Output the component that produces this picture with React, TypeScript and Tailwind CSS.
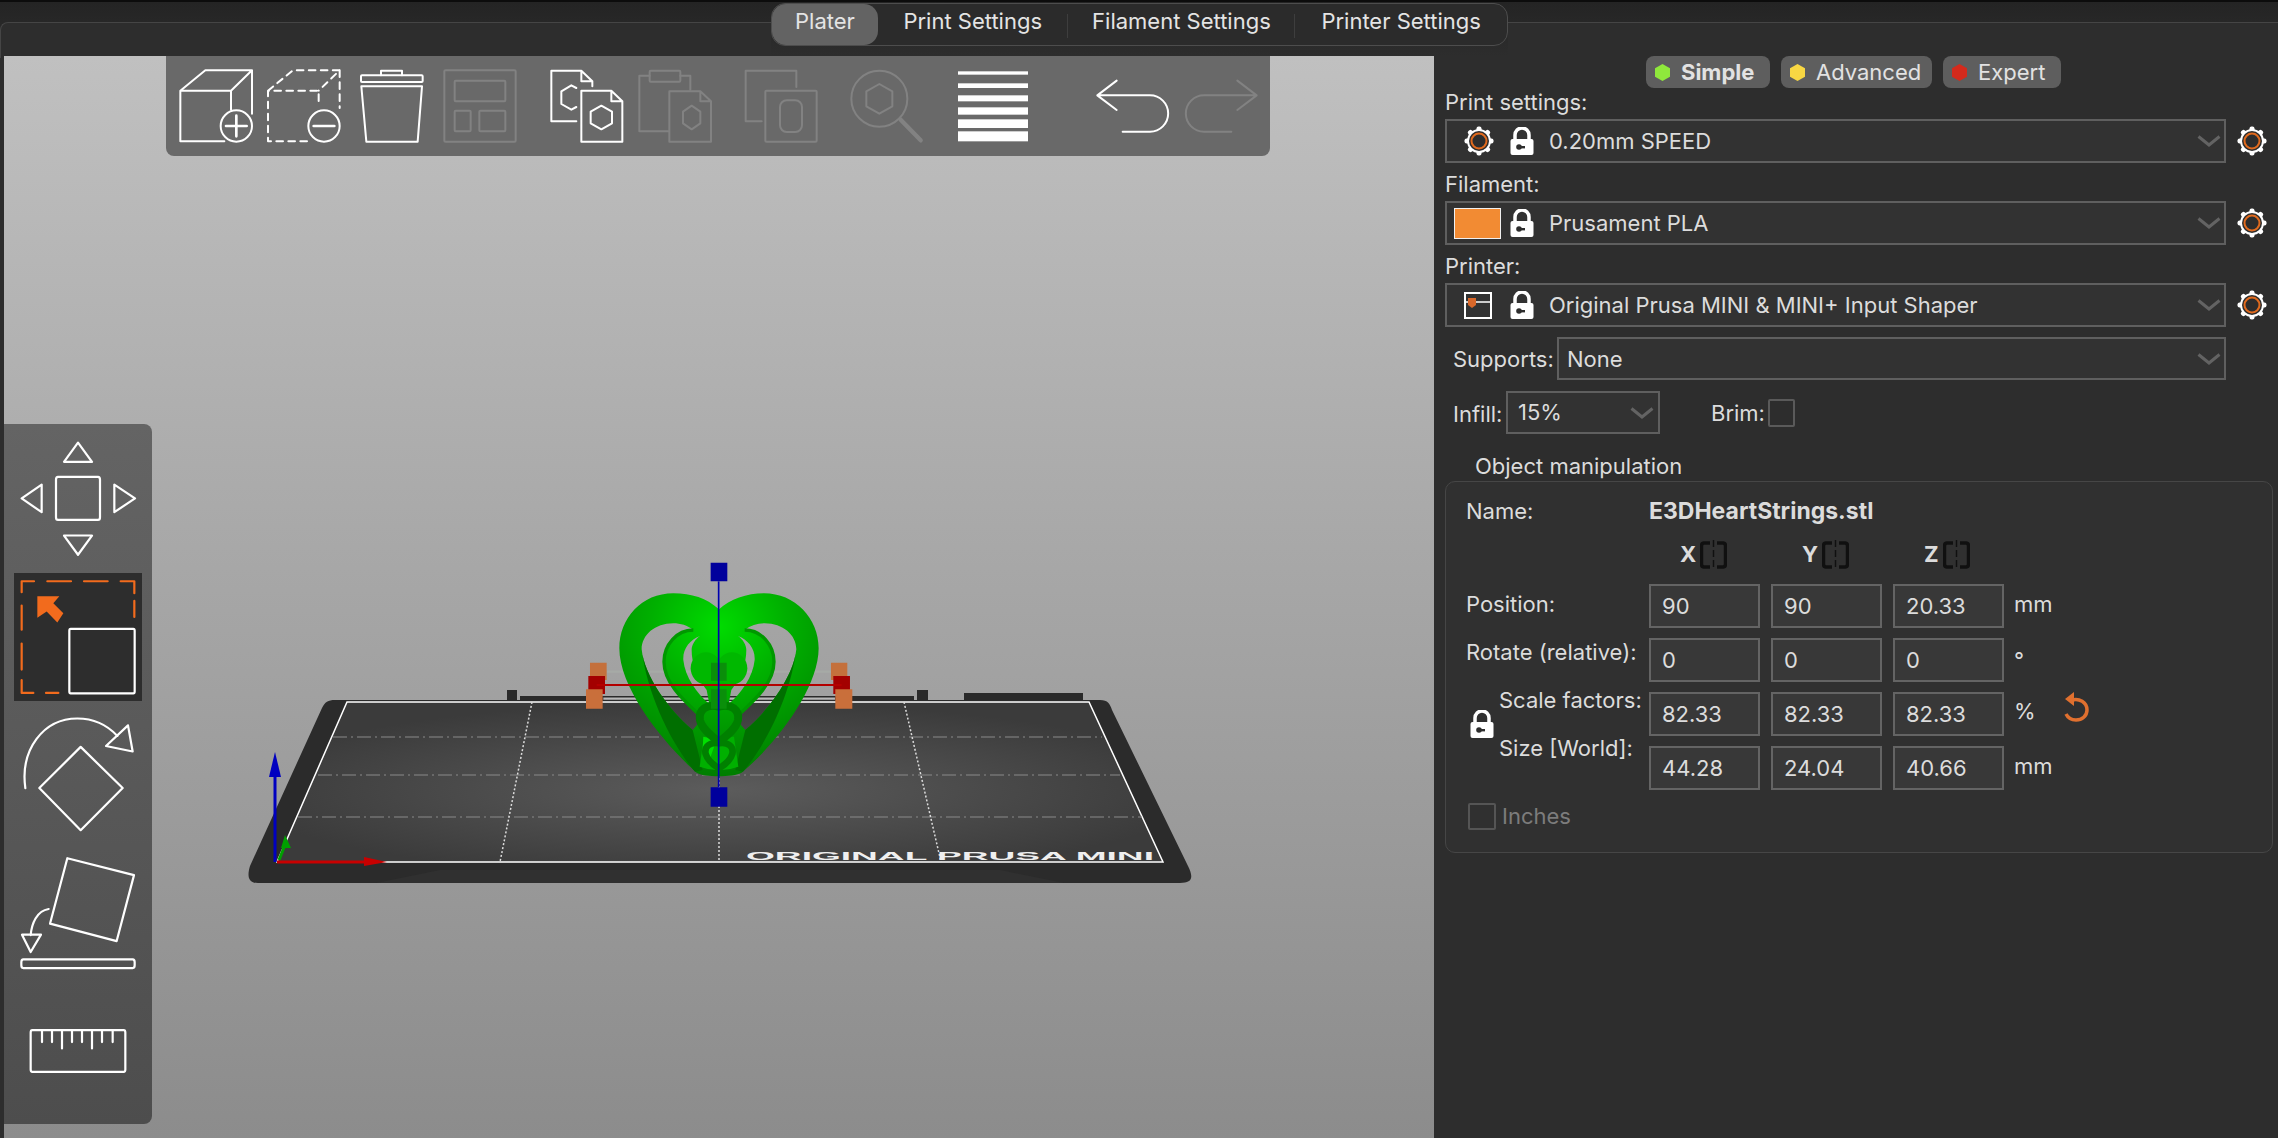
import React from 'react';

const WHITE = '#ffffff';
const DIM = '#828282';

const ToolIcon: React.FC<{ vb: number; children: React.ReactNode; color?: string; className?: string }> = ({ vb, children, color = WHITE, className = '' }) => (
  <svg
    width={76}
    height={76}
    viewBox={`${vb} 35 228 228`}
    fill="none"
    stroke={color}
    strokeWidth={6}
    strokeLinejoin="round"
    strokeLinecap="round"
    className={`shrink-0 ${className}`}
  >
    {children}
  </svg>
);

const Toolbar: React.FC = () => (
  <div className="absolute left-[162px] top-0 flex h-[100px] w-[1104px] items-center gap-3 rounded-b-lg bg-[#696969] pl-3">
    <ToolIcon vb={26}>
      <path d="M165 255H33V103H185V160M33 103L108 42H248L185 103M248 42V172" />
      <circle cx={201} cy={209} r={47} />
      <path d="M201 178V240M170 209H232" strokeWidth={8} />
    </ToolIcon>
    <ToolIcon vb={292}>
      <path d="M415 255H298V103H450V150M298 103L373 42H513L450 103M513 42V155" strokeDasharray="20 16" />
      <circle cx={466} cy={209} r={47} />
      <path d="M435 209H497" strokeWidth={8} />
    </ToolIcon>
    <ToolIcon vb={556}>
      <rect x={577} y={57} width={185} height={20} rx={3} />
      <path d="M637 57V43H700V57M578 90H760L747 256H593Z" />
    </ToolIcon>
    <ToolIcon vb={819} color={DIM}>
      <rect x={826} y={42} width={214} height={214} rx={3} />
      <rect x={857} y={73} width={152} height={62} rx={3} />
      <rect x={857} y={163} width={48} height={62} rx={3} />
      <rect x={931} y={163} width={78} height={62} rx={3} />
    </ToolIcon>
    <ToolIcon vb={1138} className="ml-[19px]">
      <path d="M1220 195H1145V43H1235L1268 75V90M1235 43V75H1268M1220 95L1205 87L1175 105V143L1205 160L1220 152" />
      <path d="M1235 103H1325L1358 135V256H1235ZM1325 103V135H1358M1295 148L1327 166V201L1295 219L1263 201V166Z" />
    </ToolIcon>
    <ToolIcon vb={1400} color={DIM}>
      <path d="M1495 225H1407V58H1438M1530 58H1560V100" />
      <rect x={1438} y={43} width={92} height={33} rx={3} />
      <path d="M1497 105H1590L1622 135V256H1497ZM1590 105V135H1622M1564 148L1590 166V201L1564 219L1538 201V166Z" />
    </ToolIcon>
    <ToolIcon vb={159} color={DIM} className="ml-[18px]">
      <path d="M215 195H167V43H319V92" />
      <rect x={226} y={103} width={154} height={153} rx={3} />
      <rect x={270} y={132} width={66} height={95} rx={20} />
    </ToolIcon>
    <ToolIcon vb={477} color={DIM} className="ml-[18px]">
      <circle cx={568} cy={127} r={84} />
      <path d="M568 83L607 105V150L568 172L529 150V105Z" />
      <path d="M632 190L692 252" strokeWidth={13} />
    </ToolIcon>
    <svg width={76} height={76} viewBox="795 35 228 228" fill={WHITE} className="ml-[18px] shrink-0">
      <rect x={804} y={45} width={210} height={10} />
      <rect x={804} y={81} width={210} height={14} />
      <rect x={804} y={117} width={210} height={18} />
      <rect x={804} y={153} width={210} height={22} />
      <rect x={804} y={189} width={210} height={26} />
      <rect x={804} y={225} width={210} height={30} />
    </svg>
    <ToolIcon vb={1215} className="ml-[52px]">
      <path d="M1280 73L1222 117L1280 161M1222 117H1380A54 54 0 0 1 1380 226H1298" />
    </ToolIcon>
    <ToolIcon vb={1215} color={DIM}>
      <g transform="translate(2658 0) scale(-1 1)">
        <path d="M1280 73L1222 117L1280 161M1222 117H1380A54 54 0 0 1 1380 226H1298" />
      </g>
    </ToolIcon>
  </div>
);

// side icons are traced on a grid that is 3x wide and 2.184x tall, hence preserveAspectRatio none
const SideIcon: React.FC<{ y: number; h: number; children: React.ReactNode; className?: string }> = ({ y, h, children, className = '' }) => (
  <svg
    width={128}
    height={h / 2.184}
    viewBox={`42 ${y} 384 ${h}`}
    preserveAspectRatio="none"
    fill="none"
    stroke={WHITE}
    strokeWidth={2.2}
    strokeLinejoin="round"
    strokeLinecap="round"
    className={`shrink-0 [&_*]:[vector-effect:non-scaling-stroke] ${className}`}
  >
    {children}
  </svg>
);

const LeftTools: React.FC = () => (
  <div className="absolute left-0 top-[368px] flex h-[700px] w-[148px] flex-col items-center rounded-r-lg bg-linear-to-b from-[#646464] to-[#4d4d4d] pt-[14px]">
    <SideIcon y={40} h={264}>
      <path d="M234 50L276 92H192ZM234 295L276 253H192ZM65 172L125 142V202ZM405 172L343 142V202Z" />
      <rect x={168} y={125} width={132} height={94} rx={6} />
    </SideIcon>
    <SideIcon y={334} h={279} className="mt-[14px] bg-[#2d2d2d]">
      <path
        d="M65 376V352H102M142 352H213M252 352H323M362 352H403V378M403 395V430M65 405V458M65 488V545M65 568V596H100M138 596H175"
        stroke="#f26b1d"
      />
      <path d="M112 385H178L160 400L190 422L172 442L140 418L112 432Z" fill="#f26b1d" stroke="none" />
      <rect x={208} y={456} width={196} height={141} rx={4} />
    </SideIcon>
    <SideIcon y={640} h={265} className="mt-[12px]">
      <path d="M76 804C60 720 130 652 232 652C280 652 320 665 352 690" />
      <path d="M384 667L398 724L318 712ZM242 714L368 804L242 896L118 804Z" />
    </SideIcon>
    <SideIcon y={950} h={255} className="mt-[21px]">
      <path d="M202 957L402 994L350 1138L150 1100Z" />
      <path d="M146 1068C110 1072 95 1100 92 1125M66 1124H123L92 1162Z" />
      <rect x={64} y={1178} width={340} height={19} rx={6} />
    </SideIcon>
    <SideIcon y={1325} h={105} className="mt-[55px]">
      <rect x={92} y={1332} width={284} height={91} rx={5} />
      <path d="M126 1332V1358M156 1332V1358M186 1332V1372M216 1332V1358M246 1332V1358M276 1332V1372M306 1332V1358M338 1332V1358" />
    </SideIcon>
  </div>
);

const HEART_BODY =
  'M477 178C440 145 395 130 340 130C245 130 178 205 178 295C178 420 320 590 410 668C430 682 520 682 545 668C640 590 776 420 776 295C776 205 705 130 612 130C560 130 510 148 477 178Z' +
  'M400 240C382 226 362 220 340 220C285 220 245 255 245 298C252 375 325 480 398 540L428 505C395 470 312 410 312 335C312 285 350 240 400 240Z' +
  'M554 240C572 226 592 220 614 220C669 220 709 255 709 298C702 375 629 480 556 540L526 505C559 470 642 410 642 335C642 285 604 240 554 240Z' +
  'M420 258C390 270 368 295 370 330C375 380 410 430 448 462L440 420C410 380 395 340 395 300C395 285 405 268 420 258Z' +
  'M534 258C564 270 586 295 584 330C579 380 544 430 506 462L514 420C544 380 559 340 559 300C559 285 549 268 534 258Z';

// the print bed and the heart model with its scale gizmo
const Scene: React.FC = () => (
  <svg className="absolute inset-0" width={1430} height={1082} viewBox="4 56 1430 1082">
    <defs>
      <radialGradient id="plate" cx="0.5" cy="0.55" r="0.55">
        <stop offset="0" stopColor="#5c5c5c" />
        <stop offset="1" stopColor="#3b3b3b" />
      </radialGradient>
      <radialGradient id="green" cx="0.5" cy="0.18" r="0.85">
        <stop offset="0" stopColor="#00dc00" />
        <stop offset="0.4" stopColor="#00b000" />
        <stop offset="1" stopColor="#007a00" />
      </radialGradient>
    </defs>

    <path d="M507 690h10v10h-10zM917 690h11v10h-11zM964 693h119v7h-119zM520 696h394v4h-394z" fill="#2a2a2a" />
    <path d="M335 700H1100C1108 700 1110 704 1112 710L1188 866C1194 878 1192 883 1180 883H258C248 883 247 876 250 866L322 708C325 702 328 700 335 700Z" fill="#2b2b2b" />
    <path d="M440 870H1000L1064 883H376Z" fill="#303030" />
    <path d="M347 702H1089L1163 862H277Z" fill="url(#plate)" stroke={WHITE} strokeWidth={1.5} />
    <g stroke="#8a8a8a" strokeWidth={1} strokeDasharray="14 4 2 4">
      <path d="M333 737H1102M318 775H1120M298 817H1142" />
    </g>
    <g stroke="#dcdcdc" strokeWidth={1.5} strokeDasharray="2 2">
      <path d="M532 702L500 862M904 702L941 862M719 702V862" />
    </g>
    <text x={746} y={860} fontSize={10} fontWeight={700} fill="#efefef" textLength={408} lengthAdjust="spacingAndGlyphs" fontFamily="Liberation Sans, sans-serif">
      ORIGINAL PRUSA MINI
    </text>

    <path d="M275 862V775" stroke="#0000c0" strokeWidth={3} />
    <path d="M275 752L281 777H269Z" fill="#0000c0" />
    <path d="M279 860L285 845" stroke="#00a000" strokeWidth={3} />
    <path d="M285 835L291 848H281Z" fill="#00a000" />
    <path d="M277 862H366" stroke="#c80000" strokeWidth={3} />
    <path d="M387 862L364 857V866Z" fill="#c80000" />

    <g transform="translate(560 550) scale(0.3333)">
      <path d="M140 365H453M500 365H813" stroke="#a6aaa6" strokeWidth={7} />
      <path d="M130 446H453M503 446H825" stroke="#b8b8b8" strokeWidth={7} />
      <path d={HEART_BODY} fill="url(#green)" fillRule="evenodd" />
      <path d="M245 298C252 375 325 480 398 540L428 660L405 665C340 590 262 440 245 298Z" fill="#006f00" />
      <path d="M709 298C702 375 629 480 556 540L526 660L549 665C614 590 692 440 709 298Z" fill="#006f00" />
      <path d="M400 240C350 240 312 285 312 335C312 410 395 470 428 505" fill="none" stroke="#009800" strokeWidth={10} />
      <path d="M554 240C604 240 642 285 642 335C642 410 559 470 526 505" fill="none" stroke="#009800" strokeWidth={10} />
      <ellipse cx={438} cy={355} rx={46} ry={48} fill="#00b800" />
      <ellipse cx={516} cy={355} rx={46} ry={48} fill="#00b800" />
      <path d="M432 560H522L535 650Q477 672 419 650Z" fill="#00b000" />
      <path d="M430 560L470 570L450 625L428 600Z" fill="#00e000" />
      <path d="M477 470C440 460 415 480 420 510C425 535 450 555 477 575C504 555 529 535 534 510C539 480 514 460 477 470Z" fill="none" stroke="#008000" strokeWidth={24} />
      <path d="M477 580C450 575 432 590 437 612C442 630 460 645 477 655C494 645 512 630 517 612C522 590 504 575 477 580Z" fill="none" stroke="#008000" strokeWidth={20} />
      <path d="M453 338h47v54h-47zM453 418h47v58h-47z" fill="#0a8f0a" />
      <path d="M90 338h50v52h-50zM813 338h49v52h-49z" fill="#c4703c" />
      <path d="M85 378h50v54h-50zM820 378h50v54h-50z" fill="#a30000" />
      <path d="M78 418h50v58h-50zM826 418h51v58h-51z" fill="#c96f3b" />
      <path d="M110 405H845" stroke="#b40000" strokeWidth={6} />
      <path d="M476 94V712" stroke="#0000b0" strokeWidth={5} />
      <path d="M452 38h50v56h-50zM452 712h50v58h-50z" fill="#00009c" />
    </g>
  </svg>
);

const Gear: React.FC<{ className?: string }> = ({ className = '' }) => (
  <svg width={30} height={30} viewBox="0 0 30 30" className={`shrink-0 ${className}`}>
    <circle cx={15} cy={15} r={12} fill={WHITE} />
    {[0, 45, 90, 135, 180, 225, 270, 315].map((a) => (
      <rect key={a} x={12.5} y={0.5} width={5} height={5} rx={2} fill={WHITE} transform={`rotate(${a} 15 15)`} />
    ))}
    <circle cx={15} cy={15} r={10} fill="#2d2d2d" />
    <circle cx={15} cy={15} r={7.5} fill="none" stroke="#e06a1e" strokeWidth={2} />
  </svg>
);

const Lock: React.FC<{ className?: string }> = ({ className = '' }) => (
  <svg width={24} height={28} viewBox="0 0 24 28" className={`shrink-0 ${className}`}>
    <path d="M5 13V8a7 7 0 0 1 14 0V13" fill="none" stroke={WHITE} strokeWidth={3.5} />
    <rect x={0.5} y={12} width={23} height={16} rx={2} fill={WHITE} />
    <circle cx={9} cy={20} r={2.8} fill="#2d2d2d" />
    <rect x={9} y={19} width={6} height={2.4} fill="#2d2d2d" />
  </svg>
);

const Chevron: React.FC<{ className?: string }> = ({ className = '' }) => (
  <svg width={24} height={12} viewBox="0 0 24 12" className={`shrink-0 ${className}`}>
    <path d="M1.5 1.5L12 10L22.5 1.5" fill="none" stroke="#636363" strokeWidth={3} />
  </svg>
);

const Hex: React.FC<{ color: string }> = ({ color }) => (
  <svg width={15} height={17} viewBox="0 0 15 17" className="shrink-0">
    <path d="M7.5 0L15 4.2V12.8L7.5 17L0 12.8V4.2Z" fill={color} />
  </svg>
);

const PrinterIcon: React.FC<{ className?: string }> = ({ className = '' }) => (
  <svg width={28} height={27} viewBox="0 0 28 27" className={`shrink-0 ${className}`}>
    <rect x={1} y={1} width={26} height={25} fill="none" stroke={WHITE} strokeWidth={2} />
    <path d="M1 10H27" stroke={WHITE} strokeWidth={1.5} />
    <path d="M4 6h8v7l-4 3-4-3z" fill="#d9682a" />
  </svg>
);

const LinkIcon: React.FC = () => (
  <svg width={27} height={30} viewBox="0 0 27 30" className="shrink-0">
    <path d="M10 3H4Q1.5 3 1.5 6V24Q1.5 27 4 27H10M17 3H23Q25.5 3 25.5 6V24Q25.5 27 23 27H17" fill="none" stroke="#101010" strokeWidth={3.5} />
    <path d="M13.5 0V30" stroke="#101010" strokeWidth={1.5} strokeDasharray="7 3" />
  </svg>
);

const ResetIcon: React.FC = () => (
  <svg width={26} height={30} viewBox="0 0 26 30" className="shrink-0">
    <path d="M9 8C16 6 24 10 24 18C24 24 19 28 13 28C8 28 5 26 3 22" fill="none" stroke="#e0702f" strokeWidth={3.5} />
    <path d="M11 0V14L2 7Z" fill="#e0702f" />
  </svg>
);

const Mode: React.FC<{ label: string; color: string; w: string; bold?: boolean }> = ({ label, color, w, bold }) => (
  <div className={`flex h-8 items-center gap-[11px] rounded-lg bg-[#5e5e5e] pl-[9px] text-[#e2e2e2] ${w} ${bold ? 'font-bold' : ''}`}>
    <Hex color={color} />
    {label}
  </div>
);

const Preset: React.FC<{ label: string; name: string; lead: React.ReactNode; first?: boolean }> = ({ label, name, lead, first }) => (
  <>
    <div className={`pb-[5px] pl-[11px] leading-6 ${first ? 'mt-[2px]' : 'mt-[9px]'}`}>{label}</div>
    <div className="flex items-center pl-[11px]">
      <div className="flex h-11 w-[781px] items-center border-2 border-[#5f5f5f] bg-[#323232]">
        <div className="flex w-[63px] shrink-0 items-center">{lead}</div>
        <Lock />
        <span className="ml-[15px] flex-1 pt-px">{name}</span>
        <Chevron className="mr-[3px]" />
      </div>
      <div className="ml-[11px]">
        <Gear />
      </div>
    </div>
  </>
);

const Field: React.FC<{ value: string }> = ({ value }) => (
  <div className="flex h-11 items-center border-2 border-[#646464] bg-[#383838] pl-[11px] pt-px">{value}</div>
);

const FIELD_ROWS = [
  { label: 'Position:', values: ['90', '90', '20.33'], unit: 'mm', pad: 'pt-[8px]', unitPad: 'pt-[8px]' },
  { label: 'Rotate (relative):', values: ['0', '0', '0'], unit: '°', pad: 'pt-[2px]', unitPad: 'pt-[10px]' },
  { label: '', values: ['82.33', '82.33', '82.33'], unit: '%', pad: '', unitPad: 'pt-[7px]' },
  { label: '', values: ['44.28', '24.04', '40.66'], unit: 'mm', pad: '', unitPad: 'pt-[8px]' },
];

const ObjectPanel: React.FC = () => (
  <div className="ml-[11px] h-[372px] w-[828px] rounded-[10px] border border-[#464646] bg-[#303030] pl-5 pt-[15px]">
    <div className="grid grid-cols-[172px_111px_111px_111px_37px_50px] gap-x-[11px]">
      <div className="flex h-7 items-center">Name:</div>
      <div className="col-span-5 flex h-7 items-center text-[23px] font-bold">E3DHeartStrings.stl</div>
    </div>
    <div className="mt-[13px] grid h-[30px] grid-cols-[172px_111px_111px_111px] gap-x-[11px] font-bold">
      <div />
      {['X', 'Y', 'Z'].map((axis) => (
        <div key={axis} className="flex items-center gap-1 pl-[31px]">
          {axis}
          <LinkIcon />
        </div>
      ))}
    </div>
    <div className="mt-4 grid grid-cols-[172px_111px_111px_111px_37px_50px] gap-x-[11px] gap-y-[10px]">
      {FIELD_ROWS.map((row, i) => (
        <React.Fragment key={i}>
          {i < 2 && <div className={`whitespace-nowrap leading-6 ${row.pad}`}>{row.label}</div>}
          {i === 2 && (
            <div className="row-span-2 flex">
              <Lock className="ml-1 mt-[18px]" />
              <div className="-mt-[4px] ml-[5px] whitespace-nowrap leading-6">
                <div>Scale factors:</div>
                <div className="mt-6">Size [World]:</div>
              </div>
            </div>
          )}
          {row.values.map((v, j) => (
            <Field key={j} value={v} />
          ))}
          <div className={`-ml-px leading-6 ${row.unitPad}`}>{row.unit}</div>
          <div>{i === 2 && <ResetIcon />}</div>
        </React.Fragment>
      ))}
    </div>
    <div className="ml-[2px] mt-[10px] flex items-center gap-[6px] text-[#7c7c7c]">
      <div className="h-[27px] w-7 rounded-[2px] border-2 border-[#555555]" />
      Inches
    </div>
  </div>
);

const Tab: React.FC<{ label: string; w: string; active?: boolean; sep?: boolean }> = ({ label, w, active, sep }) => (
  <div className={`relative flex h-full items-center justify-center pb-[7px] ${w} ${active ? 'rounded-[14px] bg-[#636363]' : ''}`}>
    {label}
    {sep && <div className="absolute right-0 top-[10px] h-6 w-px bg-[#3e3e3e]" />}
  </div>
);

export default function App() {
  return (
    <div className="flex h-screen w-full flex-col overflow-hidden bg-[#2d2d2d] text-[22px] text-[#dcdcdc] [font-family:Inter,sans-serif]">
      <header className="flex h-14 shrink-0 border-t-2 border-[#0c0c0c] bg-linear-to-b from-[#242424] to-[#2d2d2d]">
        <div className="mt-5 h-9 flex-1 rounded-tl-lg border-t border-l border-[#454545] bg-[#2d2d2d]" />
        <div className="mt-px flex h-[43px] w-[737px] rounded-[14px] border border-[#4d4d4d] bg-[#2b2b2b] text-[#e4e4e4]">
          <Tab label="Plater" w="w-[106px]" active />
          <Tab label="Print Settings" w="w-[190px]" sep />
          <Tab label="Filament Settings" w="w-[228px]" sep />
          <Tab label="Printer Settings" w="w-[212px]" />
        </div>
        <div className="mt-5 h-9 flex-1 border-t border-[#454545] bg-[#2d2d2d]" />
      </header>
      <main className="flex flex-1 pl-1">
        <div className="relative w-[1430px] shrink-0 bg-linear-to-b from-[#c0c0c0] to-[#8c8c8c]">
          <Scene />
          <Toolbar />
          <LeftTools />
        </div>
        <aside className="flex-1">
          <div className="flex gap-[11px] pl-[212px]">
            <Mode label="Simple" color="#8fe83c" w="w-[124px]" bold />
            <Mode label="Advanced" color="#f8d743" w="w-[151px]" />
            <Mode label="Expert" color="#d42a1c" w="w-[118px]" />
          </div>
          <Preset first label="Print settings:" name="0.20mm SPEED" lead={<Gear className="ml-[17px]" />} />
          <Preset label="Filament:" name="Prusament PLA" lead={<div className="ml-[7px] h-[31px] w-[47px] border border-[#f0f0f0] bg-[#f28b33]" />} />
          <Preset label="Printer:" name="Original Prusa MINI & MINI+ Input Shaper" lead={<PrinterIcon className="ml-[17px]" />} />
          <div className="mt-[10px] flex items-center pl-[19px]">
            <span className="w-[104px] pt-px">Supports:</span>
            <div className="flex h-[43px] w-[669px] items-center justify-between border-2 border-[#5f5f5f] bg-[#323232] pl-2 pr-[3px]">
              <span className="pt-px">None</span>
              <Chevron />
            </div>
          </div>
          <div className="mt-[11px] flex items-center pl-[19px]">
            <span className="w-[53px] pt-[3px]">Infill:</span>
            <div className="flex h-[43px] w-[154px] items-center justify-between border-2 border-[#5f5f5f] bg-[#323232] pl-[10px] pr-1">
              15%
              <Chevron />
            </div>
            <span className="ml-[51px] w-[57px] pt-[2px]">Brim:</span>
            <div className="h-7 w-[27px] rounded-[2px] border-2 border-[#5a5a5a]" />
          </div>
          <div className="mb-[3px] mt-5 pl-[41px] leading-6">Object manipulation</div>
          <ObjectPanel />
        </aside>
      </main>
    </div>
  );
}
